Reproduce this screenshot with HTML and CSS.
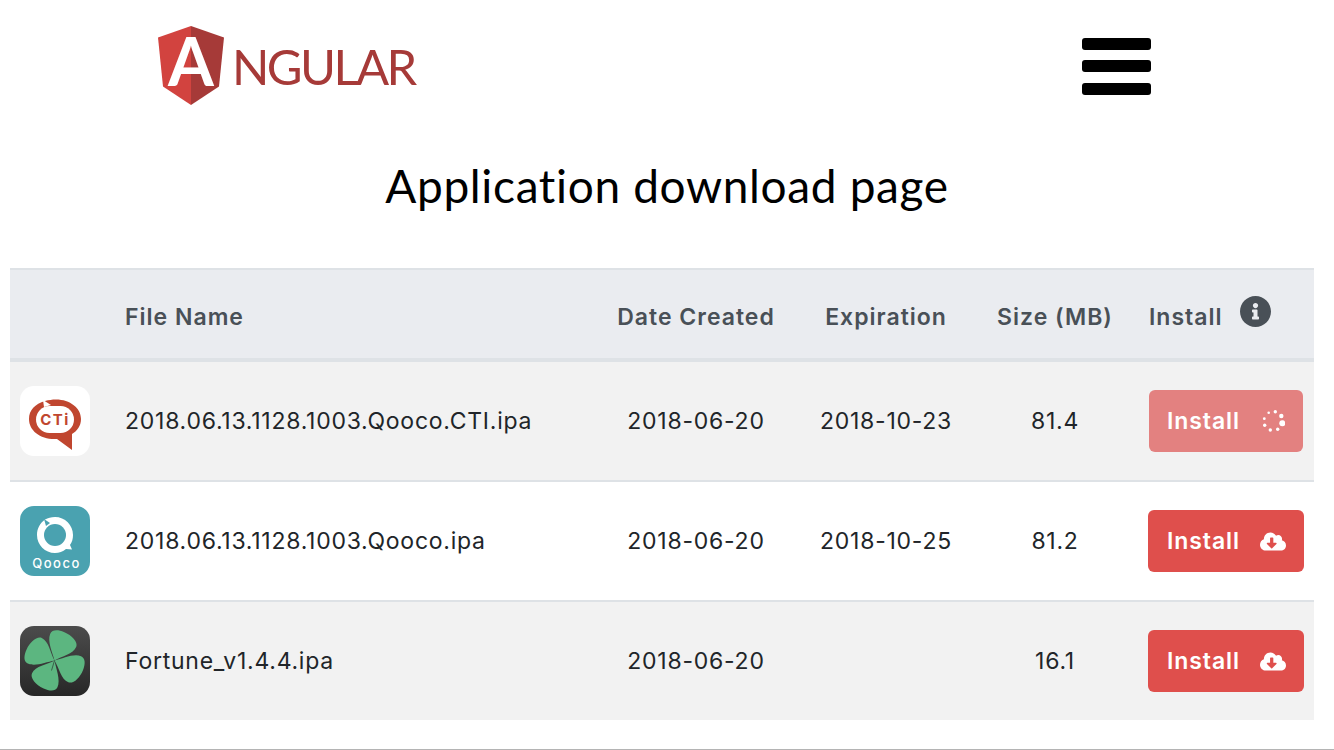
FILE: index.html
```html
<!DOCTYPE html>
<html lang="en">
<head>
  <meta charset="UTF-8">
  <title>Application download page</title>
  <link rel="stylesheet" href="styles.css">
</head>
<body>

<div class="page">
  <header class="topbar">
    <div class="logo">
      <svg class="logo-shield" width="66" height="80" viewBox="0 0 66 80">
        <polygon points="33,0 0,11.5 5,60.5 33,79 33,0" fill="#d2433f"/>
        <polygon points="33,0 66,11.5 61,60.5 33,79" fill="#a63a38"/>
        <text x="33" y="60" text-anchor="middle" class="logo-a">A</text>
      </svg>
      <span class="logo-word">NGULAR</span>
    </div>
    <div class="burger">
      <span></span>
      <span></span>
      <span></span>
    </div>
  </header>

  <h1 class="title">Application download page</h1>

  <table class="files">
    <colgroup>
      <col class="col-icon">
      <col class="col-name">
      <col class="col-date">
      <col class="col-exp">
      <col class="col-size">
      <col class="col-install">
    </colgroup>
    <thead>
      <tr>
        <th></th>
        <th class="left">File Name</th>
        <th>Date Created</th>
        <th>Expiration</th>
        <th>Size (MB)</th>
        <th class="left">
          <div class="install-head">
            <span>Install</span>
            <svg class="info" width="31" height="31" viewBox="8 8 496 496">
              <path fill="#495057" d="M256 8C119.043 8 8 119.083 8 256c0 136.997 111.043 248 248 248s248-111.003 248-248C504 119.083 392.957 8 256 8zm0 110c23.196 0 42 18.804 42 42s-18.804 42-42 42-42-18.804-42-42 18.804-42 42-42zm56 254c0 6.627-5.373 12-12 12h-88c-6.627 0-12-5.373-12-12v-24c0-6.627 5.373-12 12-12h12v-64h-12c-6.627 0-12-5.373-12-12v-24c0-6.627 5.373-12 12-12h64c6.627 0 12 5.373 12 12v100h12c6.627 0 12 5.373 12 12v24z"/>
            </svg>
          </div>
        </th>
      </tr>
    </thead>
    <tbody>
      <tr>
        <td class="icon-cell">
          <svg class="app-icon" width="70" height="70" viewBox="0 0 70 70">
            <rect width="70" height="70" rx="14" fill="#fff"/>
            <path fill="#c0462f" d="M25 15 C29 14 32 13.500 36 13.500 C50 13.500 61 22 61 33 C61 40 57 45 52 48 L52 64 L37 53 C21 54 9 45 9 33 C9 24 15 18 25 15 Z"/>
            <rect x="16" y="20" width="38" height="27" rx="13.500" fill="#fff"/>
            <path fill="#fff" d="M23 14 L31 19 L24 21 Z"/>
            <text x="35" y="39" text-anchor="middle" class="cti-text">CTi</text>
          </svg>
        </td>
        <td class="left">2018.06.13.1128.1003.Qooco.CTI.ipa</td>
        <td>2018-06-20</td>
        <td>2018-10-23</td>
        <td>81.4</td>
        <td class="left">
          <button class="install-btn busy">
            <span>Install</span>
            <svg class="spin" width="24" height="24" viewBox="0 0 24 24">
              <circle cx="14.300" cy="2.700" r="1.700" fill="#fff"/>
              <circle cx="20.300" cy="7" r="2.200" fill="#fff"/>
              <circle cx="21.300" cy="14.300" r="3" fill="#fff"/>
              <circle cx="16.700" cy="20.300" r="1.700" fill="#fff"/>
              <circle cx="9.300" cy="21" r="1.700" fill="#fff"/>
              <circle cx="3.700" cy="16.300" r="1.700" fill="#fff"/>
              <circle cx="3.300" cy="9.700" r="1.400" fill="#fff"/>
              <circle cx="7.700" cy="3.700" r="1.300" fill="#fff"/>
            </svg>
          </button>
        </td>
      </tr>
      <tr>
        <td class="icon-cell">
          <svg class="app-icon" width="70" height="70" viewBox="0 0 70 70">
            <rect width="70" height="70" rx="14" fill="#4aa2b0"/>
            <path fill="#fff" d="M25 13.500 C28 12 31 11 35 11 C45 11 53 19 53 29 C53 33 52 36 50 39 L52 43.500 L46 43 C43 45.500 39 47 35 47 C25 47 17 39 17 29 C17 22.500 20 17 25 13.500 Z"/>
            <circle cx="35" cy="29" r="11" fill="#4aa2b0"/>
            <path fill="#4aa2b0" d="M24 13 L30 17 L26 20 Z"/>
            <text x="36.500" y="62" text-anchor="middle" class="qooco-text">Qooco</text>
          </svg>
        </td>
        <td class="left">2018.06.13.1128.1003.Qooco.ipa</td>
        <td>2018-06-20</td>
        <td>2018-10-25</td>
        <td>81.2</td>
        <td class="left">
          <button class="install-btn">
            <span>Install</span>
            <svg class="cloud" width="26" height="21" viewBox="0 0 640 512">
              <path fill="#fff" d="M537.6 226.6c4.1-10.7 6.4-22.4 6.4-34.6 0-53-43-96-96-96-19.7 0-38.1 6-53.3 16.2C367 64.2 315.3 32 256 32c-88.4 0-160 71.6-160 160 0 2.7.1 5.4.2 8.1C40.2 219.8 0 273.2 0 336c0 79.5 64.5 144 144 144h368c70.7 0 128-57.3 128-128 0-61.9-44-113.6-102.4-125.4zm-132.9 88.7L299.3 420.7c-6.2 6.2-16.4 6.2-22.6 0L171.3 315.3c-10.1-10.1-2.9-27.3 11.3-27.3H248V176c0-8.8 7.2-16 16-16h48c8.8 0 16 7.2 16 16v112h65.4c14.2 0 21.4 17.2 11.3 27.3z"/>
            </svg>
          </button>
        </td>
      </tr>
      <tr>
        <td class="icon-cell">
          <svg class="app-icon" width="70" height="70" viewBox="0 0 70 70">
            <defs>
              <linearGradient id="cloverBg" x1="0" y1="0" x2="0" y2="1">
                <stop offset="0" stop-color="#4c4c4c"/>
                <stop offset="1" stop-color="#272727"/>
              </linearGradient>
            </defs>
            <rect width="70" height="70" rx="14" fill="url(#cloverBg)"/>
            <g transform="translate(34.500 34.500)" fill="#5cb680">
              <path transform="rotate(22)" d="M0 0 C-5 -7 -14 -15 -14 -23 C-14 -28 -8 -30 -2 -30 C7 -30 15 -26 15 -21 C15 -13 5 -7 0 0Z"/>
              <path transform="rotate(112)" d="M0 0 C-5 -7 -14 -15 -14 -23 C-14 -28 -8 -30 -2 -30 C7 -30 15 -26 15 -21 C15 -13 5 -7 0 0Z"/>
              <path transform="rotate(205)" d="M0 0 C-5 -7 -14 -15 -14 -23 C-14 -28 -8 -30 -2 -30 C7 -30 15 -26 15 -21 C15 -13 5 -7 0 0Z"/>
              <path transform="rotate(295)" d="M0 0 C-5 -7 -14 -15 -14 -23 C-14 -28 -8 -30 -2 -30 C7 -30 15 -26 15 -21 C15 -13 5 -7 0 0Z"/>
              <path d="M0 0 L-3 10" stroke="#2f4a3a" stroke-width="0.8" fill="none"/>
            </g>
          </svg>
        </td>
        <td class="left">Fortune_v1.4.4.ipa</td>
        <td>2018-06-20</td>
        <td></td>
        <td>16.1</td>
        <td class="left">
          <button class="install-btn">
            <span>Install</span>
            <svg class="cloud" width="26" height="21" viewBox="0 0 640 512">
              <path fill="#fff" d="M537.6 226.6c4.1-10.7 6.4-22.4 6.4-34.6 0-53-43-96-96-96-19.7 0-38.1 6-53.3 16.2C367 64.2 315.3 32 256 32c-88.4 0-160 71.6-160 160 0 2.7.1 5.4.2 8.1C40.2 219.8 0 273.2 0 336c0 79.5 64.5 144 144 144h368c70.7 0 128-57.3 128-128 0-61.9-44-113.6-102.4-125.4zm-132.9 88.7L299.3 420.7c-6.2 6.2-16.4 6.2-22.6 0L171.3 315.3c-10.1-10.1-2.9-27.3 11.3-27.3H248V176c0-8.8 7.2-16 16-16h48c8.8 0 16 7.2 16 16v112h65.4c14.2 0 21.4 17.2 11.3 27.3z"/>
            </svg>
          </button>
        </td>
      </tr>
    </tbody>
  </table>
</div>

</body>
</html>
```

FILE: styles.css
```css
html, body {
  margin: 0;
  padding: 0;
  background: #fff;
}

body {
  font-family: Inter, "Noto Sans", sans-serif;
  color: #212529;
}

.page {
  box-sizing: border-box;
  height: 750px;
  padding: 0 20px 0 10px;
  border-bottom: 1px solid #b4b4b4;
  overflow: hidden;
}

.topbar {
  display: flex;
  justify-content: space-between;
  align-items: center;
  height: 132px;
  padding: 0 163px 0 148px;
}

.logo {
  display: flex;
  align-items: center;
  gap: 8px;
}

.logo-shield {
  overflow: visible;
}

.logo-a {
  font-family: Lato, sans-serif;
  font-weight: 700;
  font-size: 66px;
  fill: #fff;
}

.logo-word {
  font-family: Lato, sans-serif;
  font-weight: 400;
  font-size: 49px;
  line-height: 1;
  letter-spacing: -2.600px;
  color: #a63a38;
}

.burger {
  display: flex;
  flex-direction: column;
  gap: 10.500px;
  width: 69px;
}

.burger span {
  display: block;
  height: 12px;
  background: #000;
  border-radius: 3px;
}

.title {
  margin: 0 -10px 0 0;
  height: 136px;
  padding-top: 23px;
  box-sizing: border-box;
  font-family: Lato, sans-serif;
  font-weight: 400;
  font-size: 46px;
  line-height: 62px;
  letter-spacing: 0.65px;
  font-variant-ligatures: none;
  text-align: center;
  color: #000;
}

.files {
  width: 1304px;
  border-collapse: collapse;
  table-layout: fixed;
  font-size: 23px;
  letter-spacing: 0.75px;
}

.col-icon { width: 100px; }
.col-name { width: 492px; }
.col-date { width: 188px; }
.col-exp { width: 192px; }
.col-size { width: 146px; }
.col-install { width: 186px; }

.files th,
.files td {
  padding: 0;
  text-align: center;
  vertical-align: middle;
}

.files th.left,
.files td.left {
  text-align: left;
  padding-left: 15px;
}

.files thead tr {
  height: 91px;
  background: #eaecf0;
  color: #495057;
}

.files th {
  font-weight: 600;
  letter-spacing: 1px;
  padding-top: 6px;
  border-top: 2px solid #dee2e6;
  border-bottom: 4px solid #dee2e6;
}

.files tbody tr {
  height: 120px;
}

.files tbody tr:first-child {
  height: 121px;
}

.files tbody tr:last-child {
  height: 119px;
}

.files td {
  border-top: 2px solid #dee2e6;
}

.files tbody tr:nth-child(odd) {
  background: #f2f2f2;
}

.files thead + tbody tr:first-child td {
  border-top: 0;
}

.app-icon {
  display: block;
  margin-left: 10px;
}

.cti-text {
  font-family: Inter, sans-serif;
  font-weight: 700;
  font-size: 15px;
  letter-spacing: 1.500px;
  fill: #c0462f;
}

.qooco-text {
  font-family: Inter, sans-serif;
  font-weight: 500;
  font-size: 13px;
  letter-spacing: 1.500px;
  fill: #fff;
}

.install-head {
  display: flex;
  align-items: center;
  gap: 17px;
  padding-left: 6px;
}

.info {
  display: block;
  margin-top: -12px;
}

.install-btn {
  display: flex;
  align-items: center;
  justify-content: space-between;
  box-sizing: border-box;
  width: 156px;
  height: 62px;
  margin-left: 5px;
  padding: 0 18px 0 19px;
  border: 0;
  border-radius: 6px;
  background: #df4f4c;
  color: #fff;
  font-family: Inter, sans-serif;
  font-size: 23px;
  font-weight: 600;
  letter-spacing: 0.9px;
  cursor: pointer;
}

.install-btn.busy {
  width: 154px;
  margin-left: 6px;
  padding: 0 18px;
  background: #e38180;
}
```
